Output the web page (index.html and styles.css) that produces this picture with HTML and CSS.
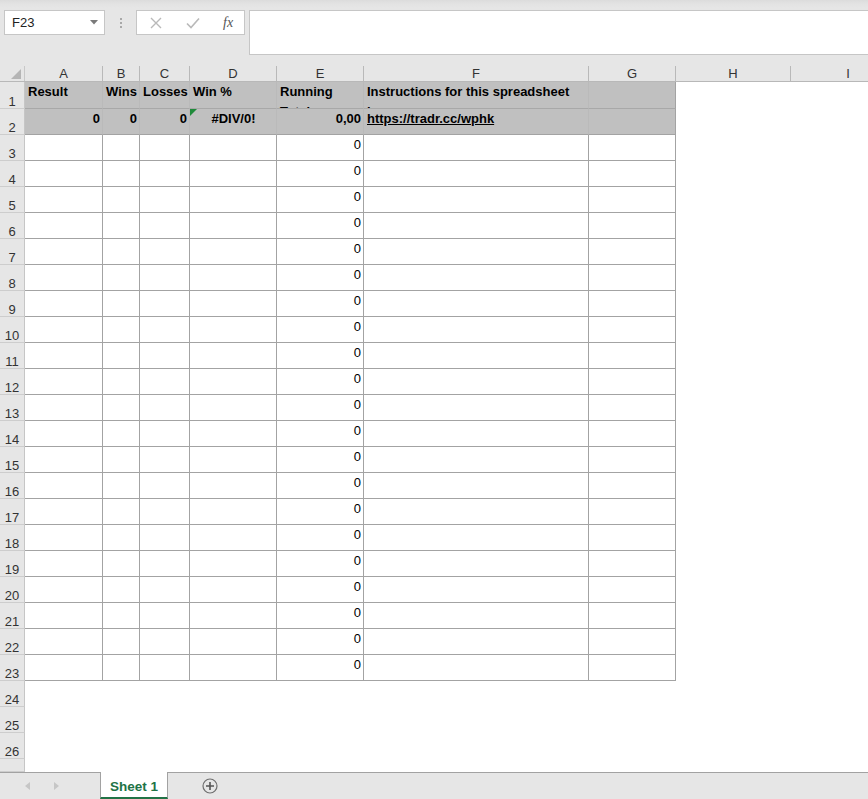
FILE: index.html
```html
<!DOCTYPE html>
<html>
<head>
<meta charset="utf-8">
<link rel="stylesheet" href="styles.css">
</head>
<body>
<div class="app">
  <div class="toolbar">
    <div class="namebox"><span>F23</span><svg class="dd" width="8" height="5" viewBox="0 0 8 5"><path d="M0 0H8L4 4.5Z" fill="#7a7a7a"/></svg></div>
    <div class="grip"><i></i><i></i><i></i></div>
    <div class="fbtns">
      <svg width="12" height="12" viewBox="0 0 12 12"><path d="M1 1L11 11M11 1L1 11" stroke="#b9b9b9" stroke-width="1.4" fill="none"/></svg>
      <svg width="14" height="12" viewBox="0 0 14 12"><path d="M1 6.5L5 10.5L13 1.5" stroke="#b9b9b9" stroke-width="1.6" fill="none"/></svg>
      <span class="fx">fx</span>
    </div>
    <div class="formula"></div>
  </div>

  <div class="sheet">
    <div class="colhead">
      <div class="corner"><svg width="12" height="12" viewBox="0 0 12 12"><path d="M11 1V11H1Z" fill="#b5b5b5"/></svg></div>
      <div class="ch">A</div><div class="ch">B</div><div class="ch">C</div><div class="ch">D</div><div class="ch">E</div><div class="ch">F</div><div class="ch">G</div><div class="ch">H</div><div class="ch">I</div>
    </div>

    <div class="row r1">
      <div class="rh">1</div>
      <div class="c s"><div class="wrap">Result</div></div>
      <div class="c s"><div class="wrap">Wins</div></div>
      <div class="c s"><div class="wrap">Losses</div></div>
      <div class="c s"><div class="wrap">Win %</div></div>
      <div class="c s"><div class="wrap">Running Total</div></div>
      <div class="c s"><div class="wrap">Instructions for this spreadsheet here:</div></div>
      <div class="c s last"></div>
    </div>
    <div class="row r2">
      <div class="rh">2</div>
      <div class="c s b num">0</div>
      <div class="c s b num">0</div>
      <div class="c s b num">0</div>
      <div class="c s b mid"><span class="flag"></span>#DIV/0!</div>
      <div class="c s b num">0,00</div>
      <div class="c s b"><span class="link">https://tradr.cc/wphk</span></div>
      <div class="c s last"></div>
    </div>

    <div class="row"><div class="rh">3</div><div class="c"></div><div class="c"></div><div class="c"></div><div class="c"></div><div class="c num">0</div><div class="c"></div><div class="c"></div></div>
    <div class="row"><div class="rh">4</div><div class="c"></div><div class="c"></div><div class="c"></div><div class="c"></div><div class="c num">0</div><div class="c"></div><div class="c"></div></div>
    <div class="row"><div class="rh">5</div><div class="c"></div><div class="c"></div><div class="c"></div><div class="c"></div><div class="c num">0</div><div class="c"></div><div class="c"></div></div>
    <div class="row"><div class="rh">6</div><div class="c"></div><div class="c"></div><div class="c"></div><div class="c"></div><div class="c num">0</div><div class="c"></div><div class="c"></div></div>
    <div class="row"><div class="rh">7</div><div class="c"></div><div class="c"></div><div class="c"></div><div class="c"></div><div class="c num">0</div><div class="c"></div><div class="c"></div></div>
    <div class="row"><div class="rh">8</div><div class="c"></div><div class="c"></div><div class="c"></div><div class="c"></div><div class="c num">0</div><div class="c"></div><div class="c"></div></div>
    <div class="row"><div class="rh">9</div><div class="c"></div><div class="c"></div><div class="c"></div><div class="c"></div><div class="c num">0</div><div class="c"></div><div class="c"></div></div>
    <div class="row"><div class="rh">10</div><div class="c"></div><div class="c"></div><div class="c"></div><div class="c"></div><div class="c num">0</div><div class="c"></div><div class="c"></div></div>
    <div class="row"><div class="rh">11</div><div class="c"></div><div class="c"></div><div class="c"></div><div class="c"></div><div class="c num">0</div><div class="c"></div><div class="c"></div></div>
    <div class="row"><div class="rh">12</div><div class="c"></div><div class="c"></div><div class="c"></div><div class="c"></div><div class="c num">0</div><div class="c"></div><div class="c"></div></div>
    <div class="row"><div class="rh">13</div><div class="c"></div><div class="c"></div><div class="c"></div><div class="c"></div><div class="c num">0</div><div class="c"></div><div class="c"></div></div>
    <div class="row"><div class="rh">14</div><div class="c"></div><div class="c"></div><div class="c"></div><div class="c"></div><div class="c num">0</div><div class="c"></div><div class="c"></div></div>
    <div class="row"><div class="rh">15</div><div class="c"></div><div class="c"></div><div class="c"></div><div class="c"></div><div class="c num">0</div><div class="c"></div><div class="c"></div></div>
    <div class="row"><div class="rh">16</div><div class="c"></div><div class="c"></div><div class="c"></div><div class="c"></div><div class="c num">0</div><div class="c"></div><div class="c"></div></div>
    <div class="row"><div class="rh">17</div><div class="c"></div><div class="c"></div><div class="c"></div><div class="c"></div><div class="c num">0</div><div class="c"></div><div class="c"></div></div>
    <div class="row"><div class="rh">18</div><div class="c"></div><div class="c"></div><div class="c"></div><div class="c"></div><div class="c num">0</div><div class="c"></div><div class="c"></div></div>
    <div class="row"><div class="rh">19</div><div class="c"></div><div class="c"></div><div class="c"></div><div class="c"></div><div class="c num">0</div><div class="c"></div><div class="c"></div></div>
    <div class="row"><div class="rh">20</div><div class="c"></div><div class="c"></div><div class="c"></div><div class="c"></div><div class="c num">0</div><div class="c"></div><div class="c"></div></div>
    <div class="row"><div class="rh">21</div><div class="c"></div><div class="c"></div><div class="c"></div><div class="c"></div><div class="c num">0</div><div class="c"></div><div class="c"></div></div>
    <div class="row"><div class="rh">22</div><div class="c"></div><div class="c"></div><div class="c"></div><div class="c"></div><div class="c num">0</div><div class="c"></div><div class="c"></div></div>
    <div class="row"><div class="rh">23</div><div class="c"></div><div class="c"></div><div class="c"></div><div class="c"></div><div class="c num">0</div><div class="c"></div><div class="c"></div></div>
    <div class="row"><div class="rh">24</div></div>
    <div class="row"><div class="rh">25</div></div>
    <div class="row"><div class="rh">26</div></div>
    <div class="row"><div class="rh"></div></div>
  </div>

  <div class="tabs">
    <div class="nav">
      <svg width="6" height="8" viewBox="0 0 6 8"><path d="M5 0V8L0 4Z" fill="#c6c6c6"/></svg>
      <svg width="6" height="8" viewBox="0 0 6 8"><path d="M1 0V8L6 4Z" fill="#c6c6c6"/></svg>
    </div>
    <div class="tab">Sheet 1</div>
    <div class="add"><svg width="16" height="16" viewBox="0 0 16 16"><circle cx="8" cy="8" r="7" fill="none" stroke="#6e6e6e" stroke-width="1.2"/><path d="M8 4V12M4 8H12" stroke="#555" stroke-width="1.6"/></svg></div>
  </div>
</div>
</body>
</html>
```
FILE: styles.css
```css
* { box-sizing: border-box; }
html, body { margin: 0; padding: 0; }
body {
  width: 868px;
  height: 799px;
  overflow: hidden;
  background: #fff;
  font-family: "Liberation Sans", Arial, sans-serif;
  font-size: 13px;
  color: #000;
}
.app {
  display: flex;
  flex-direction: column;
  height: 799px;
}

/* toolbar */
.toolbar {
  height: 66px;
  flex: none;
  display: flex;
  align-items: flex-start;
  padding: 10px 0 0 4px;
  background: linear-gradient(#dcdcdc 0, #e3e3e3 4px, #e6e6e6 8px);
}
.namebox {
  width: 101px;
  height: 25px;
  background: #fff;
  border: 1px solid #c6c6c6;
  display: flex;
  align-items: center;
  justify-content: space-between;
  padding: 0 6px 0 7px;
  color: #222;
  font-size: 13px;
}
.grip {
  width: 31px;
  height: 25px;
  display: flex;
  flex-direction: column;
  align-items: center;
  justify-content: center;
  gap: 2px;
}
.grip i {
  display: block;
  width: 2px;
  height: 2px;
  background: #a8a8a8;
}
.fbtns {
  width: 109px;
  height: 25px;
  background: #fff;
  border: 1px solid #c6c6c6;
  display: flex;
  align-items: center;
  padding-left: 13px;
  gap: 24px;
}
.fx {
  font-family: "Liberation Serif", serif;
  font-style: italic;
  font-size: 14px;
  color: #555;
  margin-left: -1px;
}
.formula {
  flex: 1;
  height: 45px;
  margin-left: 4px;
  background: #fff;
  border: 1px solid #c6c6c6;
  border-right: none;
}

/* sheet */
.sheet {
  flex: 1;
  overflow: hidden;
  background: #fff;
}
.colhead, .row {
  display: grid;
  grid-template-columns: 25px 78px 37px 50px 87px 87px 225px 87px 115px 115px;
}
.colhead {
  height: 16px;
  background: #e6e6e6;
  border-bottom: 1px solid #b8b8b8;
}
.corner {
  display: flex;
  align-items: flex-end;
  justify-content: flex-end;
  padding: 0 2px 1px 0;
  border-right: 1px solid #c8c8c8;
}
.ch {
  border-right: 1px solid #b9b9b9;
  text-align: center;
  line-height: 15px;
  color: #333;
  font-size: 13px;
}
.row { height: 26px; }
.row.r1 { height: 27px; }
.row:last-child { height: 13px; }
.rh {
  background: #e6e6e6;
  border-right: 1px solid #c6c6c6;
  border-bottom: 1px solid #cdcdcd;
  color: #333;
  text-align: center;
  line-height: 15px;
  padding-top: 11px;
  overflow: hidden;
}
.r1 .rh { padding-top: 12px; }
.c {
  border-right: 1px solid #a3a3a3;
  border-bottom: 1px solid #a3a3a3;
  overflow: hidden;
  white-space: nowrap;
  line-height: 15px;
  padding: 2px 2px 0 3px;
  position: relative;
}
.c.s {
  background: #c0c0c0;
  border-right-color: #bababa;
  border-bottom-color: #a8a8a8;
  font-weight: bold;
}
.c.s.last { border-right-color: #a3a3a3; }
.r2 .c.s { border-bottom-color: #a3a3a3; }
.r1 .c { padding-top: 1px; }
.wrap {
  white-space: normal;
  line-height: 20px;
  margin-top: -1px;
}
.num { text-align: right; }
.mid { text-align: center; }
.link { text-decoration: underline; }
.flag {
  position: absolute;
  left: 0;
  top: 0;
  width: 0;
  height: 0;
  border-top: 7px solid #1f8a3a;
  border-right: 7px solid transparent;
}

/* tabs */
.tabs {
  height: 27px;
  flex: none;
  display: flex;
  align-items: stretch;
  background: #e6e6e6;
  border-top: 1px solid #a2a2a2;
}
.nav {
  width: 100px;
  display: flex;
  align-items: center;
  padding-left: 25px;
  gap: 22px;
}
.tab {
  width: 68px;
  margin-top: -1px;
  background: #fff;
  border-left: 1px solid #a2a2a2;
  border-right: 1px solid #a2a2a2;
  border-bottom: 2px solid #217346;
  color: #217346;
  font-weight: bold;
  font-size: 13.5px;
  text-align: center;
  line-height: 29px;
}
.add {
  display: flex;
  align-items: center;
  margin-left: 34px;
}
```
